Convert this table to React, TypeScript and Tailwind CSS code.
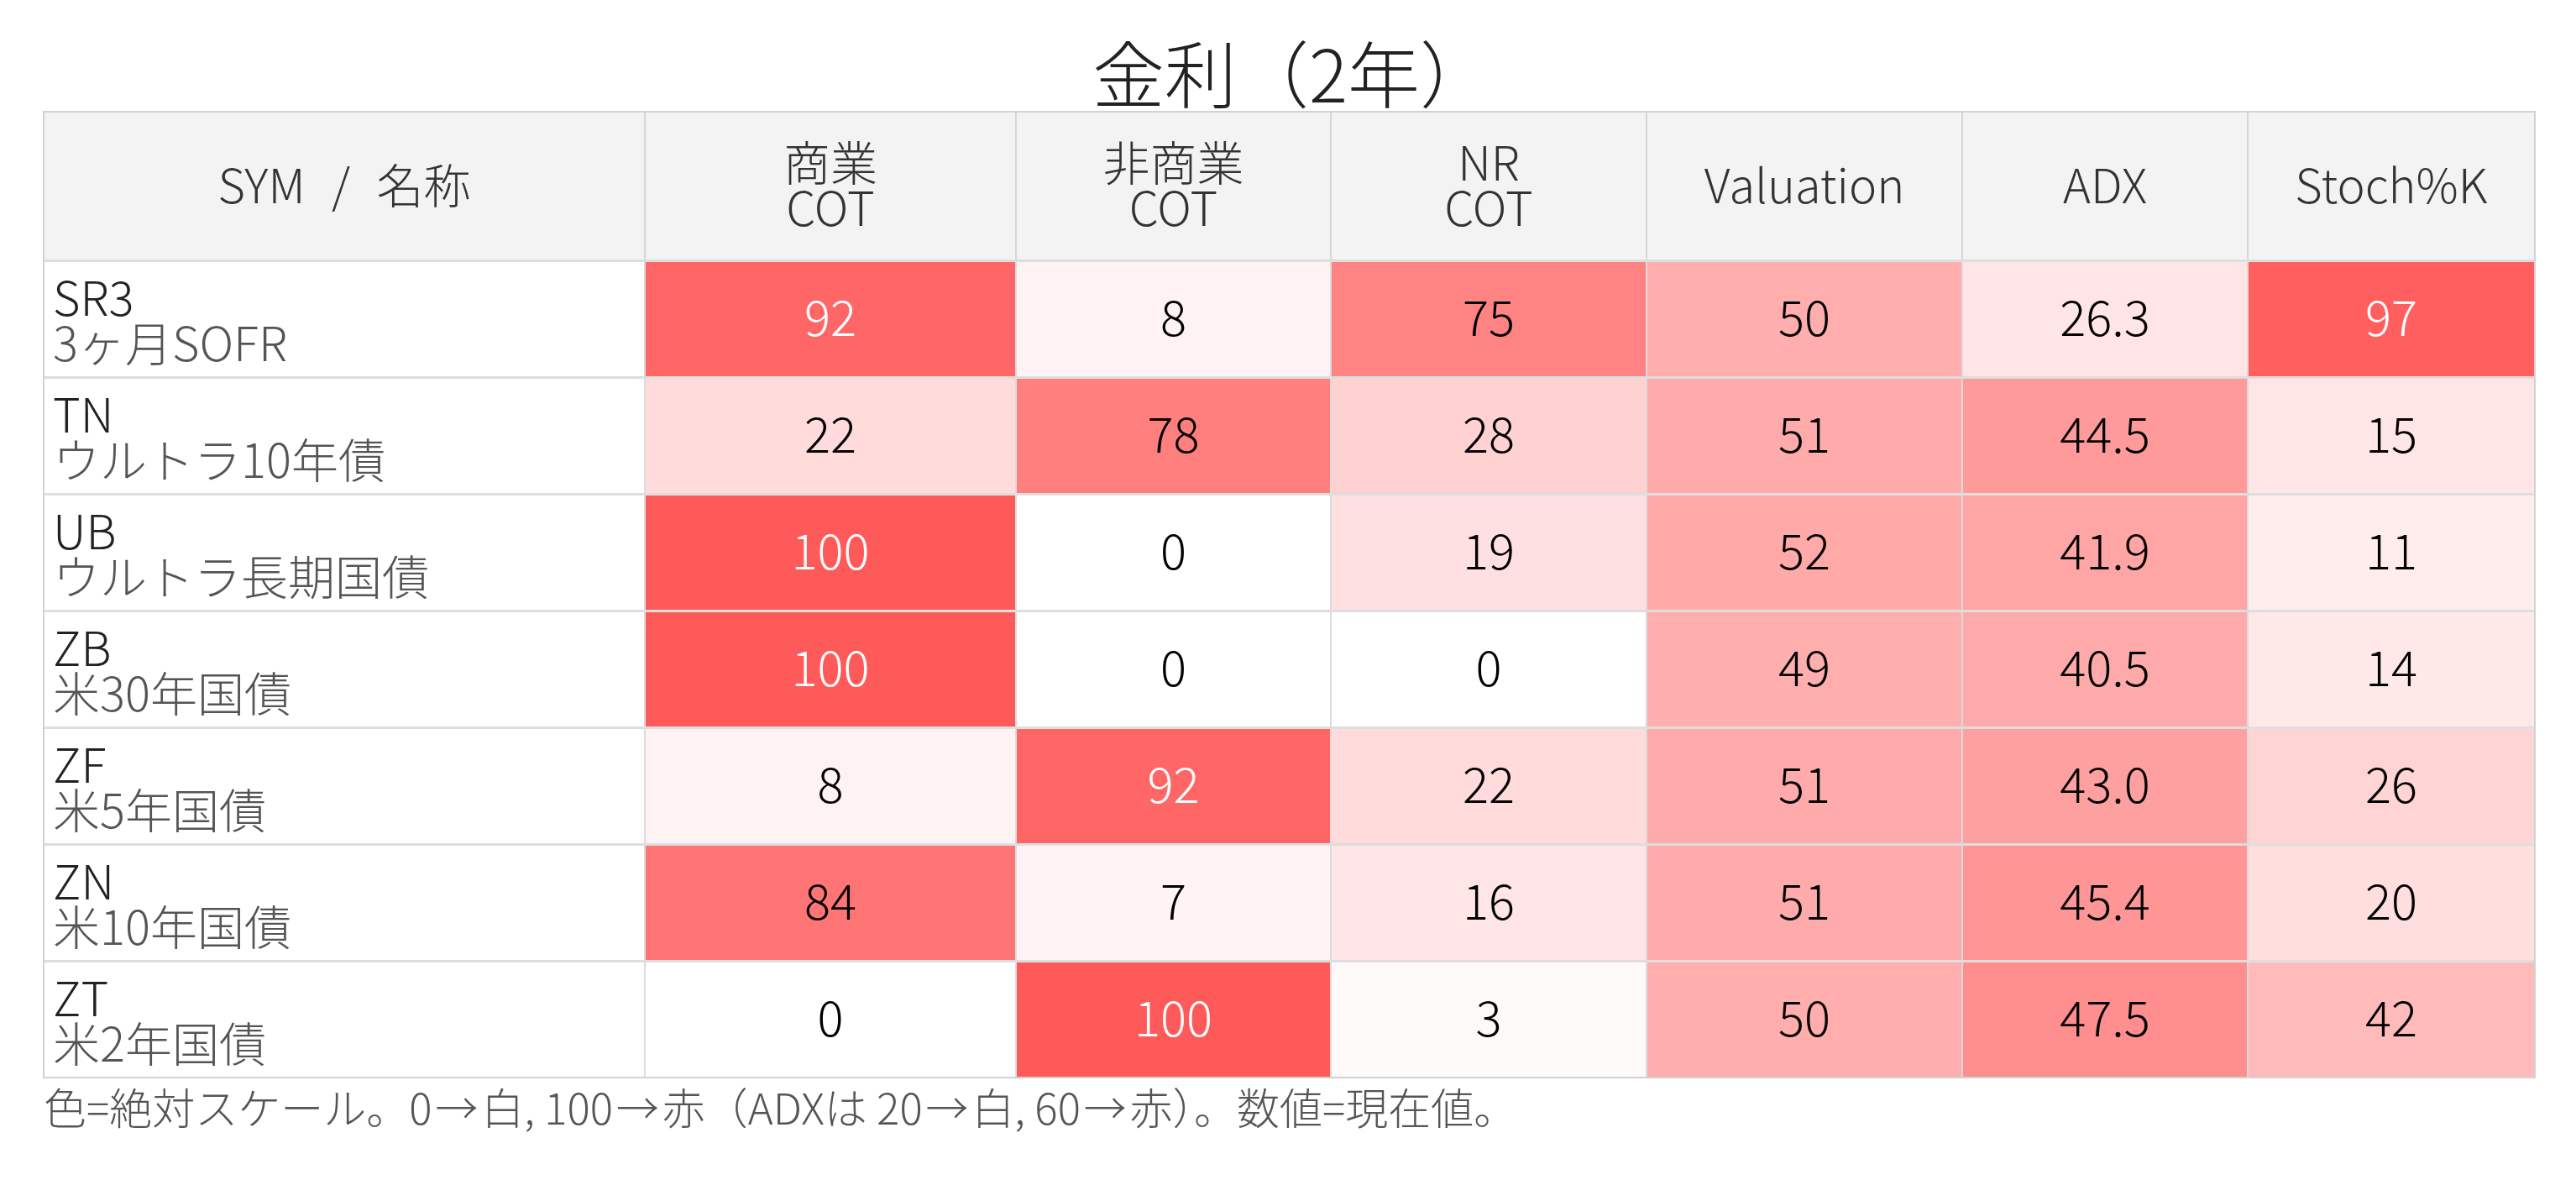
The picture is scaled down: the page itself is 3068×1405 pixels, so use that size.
import React from 'react'

interface Row {
  sym: string
  name: string
  values: number[]
}

const ROWS: Row[] = [
  { sym: 'SR3', name: '3ヶ月SOFR', values: [92, 8, 75, 50, 26.3, 97] },
  { sym: 'TN', name: 'ウルトラ10年債', values: [22, 78, 28, 51, 44.5, 15] },
  { sym: 'UB', name: 'ウルトラ長期国債', values: [100, 0, 19, 52, 41.9, 11] },
  { sym: 'ZB', name: '米30年国債', values: [100, 0, 0, 49, 40.5, 14] },
  { sym: 'ZF', name: '米5年国債', values: [8, 92, 22, 51, 43.0, 26] },
  { sym: 'ZN', name: '米10年国債', values: [84, 7, 16, 51, 45.4, 20] },
  { sym: 'ZT', name: '米2年国債', values: [0, 100, 3, 50, 47.5, 42] },
]

const GRID = 'grid grid-cols-[714px_442px_375px_376px_376px_340px_342px]'

// ADX column (index 4) uses 20→white, 60→red; everything else 0→white, 100→red
function scale(value: number, col: number) {
  const t = col === 4 ? (value - 20) / 40 : value / 100
  return Math.min(1, Math.max(0, t))
}

function cellStyle(t: number) {
  const gb = Math.round(255 - t * 165)
  return {
    backgroundColor: `rgb(255, ${gb}, ${gb})`,
    color: t >= 0.88 ? '#ffffff' : '#000000',
  }
}

function HeaderCell({ lines, first }: { lines: string[]; first?: boolean }) {
  return (
    <div
      className={
        'flex flex-col items-center justify-center pb-[8px] text-[56px] leading-[54px] text-[#333]' +
        (first ? ' [word-spacing:0.34em]' : ' border-l-2 border-[#d6d6d6]')
      }
    >
      {lines.map((l) => (
        <span key={l}>{l}</span>
      ))}
    </div>
  )
}

const Arrow = () => <span className="inline-block w-[1.15em] text-center">→</span>

export default function App() {
  return (
    <div className="w-[3068px] h-[1405px] bg-white font-['Noto_Sans_CJK_JP','Noto_Sans',sans-serif] font-light">
      {/* Title */}
      <div className="h-[132px] flex items-end justify-center pb-[4px] pl-[10px] text-[86px] leading-none text-[#222]">
        金利（2年）
      </div>

      {/* Table */}
      <div className="ml-[51px] w-[2969px] border-2 border-[#d2d2d2]">
        <div className={GRID + ' h-[175px] bg-[#f3f3f3]'}>
          <HeaderCell lines={['SYM / 名称']} first />
          <HeaderCell lines={['商業', 'COT']} />
          <HeaderCell lines={['非商業', 'COT']} />
          <HeaderCell lines={['NR', 'COT']} />
          <HeaderCell lines={['Valuation']} />
          <HeaderCell lines={['ADX']} />
          <HeaderCell lines={['Stoch%K']} />
        </div>

        {ROWS.map((row) => (
          <div key={row.sym} className={GRID + ' h-[139px] border-t-[3px] border-[#dedede]'}>
            <div className="flex flex-col justify-center pl-[10px] pb-[2px] text-[56px] leading-[54px]">
              <span className="text-[#222]">{row.sym}</span>
              <span className="text-[#555]">{row.name}</span>
            </div>
            {row.values.map((v, i) => (
              <div
                key={i}
                className="flex items-center justify-center pb-[10px] border-l-2 border-[#dcdcdc] text-[58px] leading-none"
                style={cellStyle(scale(v, i))}
              >
                {i === 4 ? v.toFixed(1) : v}
              </div>
            ))}
          </div>
        ))}
      </div>

      {/* Note */}
      <div className="mt-[8px] pl-[52px] text-[51px] leading-none text-[#555]">
        色=絶対スケール。0<Arrow />白, 100<Arrow />赤（ADXは 20<Arrow />白, 60<Arrow />赤）。数値=現在値。
      </div>
    </div>
  )
}
